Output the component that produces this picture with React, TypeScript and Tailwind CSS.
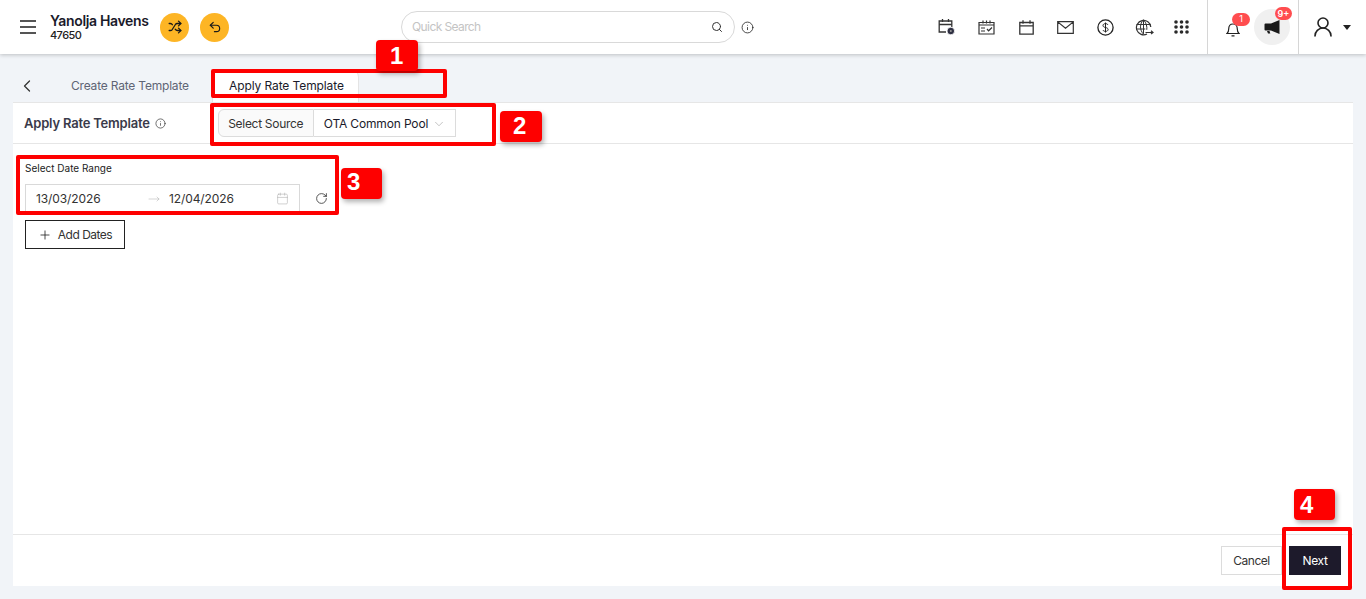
import React from 'react';
import { Shuffle, Undo2, Search, Info, ChevronLeft, ChevronDown, Calendar, RotateCw, Plus, MoveRight, UserRound } from 'lucide-react';

// red callout number over the screenshot
const Badge = ({ n, className }: { n: string; className: string }) => (
  <div className={`absolute z-20 flex h-[31px] items-center rounded-[4px] bg-[#fe0000] font-['Liberation_Sans',sans-serif] text-[24px] font-bold text-white shadow-[2px_3px_5px_rgba(0,0,0,0.3)] ${className}`}>
    {n}
  </div>
);

const Outline = ({ className }: { className: string }) => (
  <div className={`pointer-events-none absolute z-20 rounded-[2px] border-[4px] border-[#fe0000] ${className}`} />
);

const CalPlusIcon = () => (
  <svg width="18" height="18" viewBox="0 0 18 18" fill="none" stroke="#333" strokeWidth="1.3">
    <path d="M8 14H1.2V3h12.6v6" />
    <path d="M1.2 6.5h12.6M4.5 1v3M10.5 1v3" />
    <circle cx="12.8" cy="13" r="3.8" fill="#2f3042" stroke="#fff" strokeWidth="0.8" />
    <circle cx="12.8" cy="13" r="1" fill="#999" stroke="none" />
  </svg>
);

const CalListIcon = () => (
  <svg width="17" height="15" viewBox="0 0 17 15" fill="none" stroke="#333" strokeWidth="1.2">
    <path d="M1 2.5h15v11.5H1zM1 5h15M5 .5v3M8.5 .5v3M12 .5v3" />
    <path d="M3 8h4M3 11h4M9 9l1.6 1.8L14 7.5" />
  </svg>
);

const CalIcon = () => (
  <svg width="15" height="15" viewBox="0 0 15 15" fill="none" stroke="#333" strokeWidth="1.3">
    <path d="M.8 2.5h13.4v11.7H.8zM.8 5.8h13.4M4 .3v3.4M11 .3v3.4" />
  </svg>
);

const MailIcon = () => (
  <svg width="17" height="13" viewBox="0 0 17 13" fill="none" stroke="#333" strokeWidth="1.2">
    <path d="M.7.7h15.6v11.6H.7zM.7.9l7.8 6.4 7.8-6.4" />
  </svg>
);

const DollarIcon = () => (
  <svg width="17" height="17" viewBox="0 0 17 17" fill="none" stroke="#222" strokeWidth="1.3">
    <circle cx="8.5" cy="8.5" r="7.6" />
    <path d="M11 6c-.5-1-1.4-1.4-2.5-1.4C7.200 4.600 6 5.300 6 6.500s1.100 1.700 2.500 2 2.600.8 2.600 2-1.300 1.900-2.600 1.900c-1.100 0-2.100-.4-2.600-1.400M8.500 3.500v10" strokeWidth="1" />
  </svg>
);

const GlobeIcon = () => (
  <svg width="19" height="17" viewBox="0 0 19 17" fill="none" stroke="#333" strokeWidth="1">
    <path d="M12 15A7.200 7.200 0 1 1 15.800 8" strokeWidth="1.2" />
    <path d="M8.500 .8c-4 4-4 10 0 14.400M8.500 .8c3 3 3.600 7 3.300 10M8.500 .8v14M1.500 5.500h14M1.300 10h9" />
    <path d="M10.500 13.500h7.500M16 11.800l2 1.700-2 1.500" strokeWidth="1.2" />
  </svg>
);

const GripIcon = () => (
  <svg width="15" height="14" viewBox="0 0 15 14" fill="#2a2a2a">
    {[2, 7.5, 13].flatMap((cx) =>
      [2, 7, 12].map((cy) => <circle key={`${cx}-${cy}`} cx={cx} cy={cy} r="1.8" />)
    )}
  </svg>
);

const BellIcon = () => (
  <svg width="14" height="15" viewBox="0 0 14 15" fill="none" stroke="#222" strokeWidth="1.200">
    <path d="M1 11.500c1.400-1 1.700-2.500 1.700-4.500C2.700 4 4.500 2 7 2s4.300 2 4.300 5c0 2 .3 3.500 1.700 4.500zM5.500 13.800h3" />
  </svg>
);

const MegaphoneIcon = () => (
  <svg width="16" height="15" viewBox="0 0 16 15" fill="#1a1a1a">
    <path d="M15.500 0v14L7 10.500H1.500A1 1 0 0 1 .5 9.500v-5a1 1 0 0 1 1-1H7z" />
    <path d="M3 11h2.500l.8 2.500H4z" />
  </svg>
);

const Header = () => (
  <header className="relative z-10 flex h-[54px] items-center bg-white pl-[20px] shadow-[0_1px_4px_rgba(0,0,0,0.22)]">
    <div className="flex w-[16px] flex-col gap-[4.500px]">
      <span className="h-[1.500px] bg-[#555]" />
      <span className="h-[1.500px] bg-[#555]" />
      <span className="h-[1.500px] bg-[#555]" />
    </div>
    <div className="ml-[14px] w-[110px]">
      <div className="text-[14px] leading-[17px] font-semibold tracking-[-0.35px] text-[#1a1a2a]">Yanolja Havens</div>
      <div className="text-[11px] leading-[13px] font-medium tracking-[-0.6px] text-[#222]">47650</div>
    </div>
    <button className="flex h-[29px] w-[29px] items-center justify-center rounded-full bg-[#fdb525]">
      <Shuffle size={14} strokeWidth={2.2} className="text-[#1a1a1a]" />
    </button>
    <button className="ml-[11px] flex h-[29px] w-[29px] items-center justify-center rounded-full bg-[#fdb525]">
      <Undo2 size={14} strokeWidth={2} className="text-[#1a1a1a]" />
    </button>
    <div className="ml-[172px] flex h-[32px] w-[334px] items-center justify-between rounded-full border border-[#d9d9d9] pr-[11px] pl-[10px]">
      <span className="text-[12px] tracking-[-0.6px] text-[#c4c4c4]">Quick Search</span>
      <Search size={12} strokeWidth={2} className="text-[#333]" />
    </div>
    <Info size={13} strokeWidth={1.5} className="ml-[6px] text-[#222]" />
    <div className="ml-[184px] flex items-center">
      <div className="flex w-[40px]"><CalPlusIcon /></div>
      <div className="flex w-[41px]"><CalListIcon /></div>
      <div className="flex w-[38px]"><CalIcon /></div>
      <div className="flex w-[40px]"><MailIcon /></div>
      <div className="flex w-[38px]"><DollarIcon /></div>
      <div className="flex w-[39px]"><GlobeIcon /></div>
      <div className="flex w-[33px]"><GripIcon /></div>
    </div>
    <div className="flex h-[54px] items-center border-l border-[#d6d6d6]">
      <div className="relative ml-[18px] mt-[4px]">
        <BellIcon />
        <span className="absolute top-[-9px] left-[6px] flex h-[13px] w-[18px] items-center justify-center rounded-full bg-[#ff4d4f] text-[9px] text-white">1</span>
      </div>
      <div className="relative ml-[14px] flex h-[36px] w-[36px] items-center justify-center rounded-full bg-[#f0f0f0]">
        <MegaphoneIcon />
        <span className="absolute top-[-2px] left-[21px] flex h-[13px] w-[17px] items-center justify-center rounded-full bg-[#ff4d4f] text-[9px] font-semibold text-white">9+</span>
      </div>
    </div>
    <div className="ml-[8px] flex h-[54px] items-center border-l border-[#d6d6d6] pl-[12px]">
      <UserRound size={24} strokeWidth={1.6} className="text-[#222]" />
      <span className="ml-[8px] h-0 w-0 border-x-[4px] border-t-[5px] border-x-transparent border-t-[#222]" />
    </div>
  </header>
);

export default function App() {
  return (
    <div className="relative flex h-[599px] flex-col overflow-hidden bg-[#f1f4f8] font-['Inter','Liberation_Sans',sans-serif]">
      <Header />
      <div className="flex h-[48px] items-end pl-[13px]">
        <div className="flex h-[33px] w-[45px] items-center pl-[4px]">
          <ChevronLeft size={20} strokeWidth={1.5} className="text-[#333]" />
        </div>
        <div className="flex h-[33px] w-[154px] items-center pl-[13px] text-[12px] tracking-[-0.2px] text-[#5f6475]">Create Rate Template</div>
        <div className="flex h-[33px] w-[147px] items-center rounded-t-[8px] border-x border-t border-[#e4e4e4] bg-white pl-[16px] text-[12px] tracking-[-0.1px] text-[#1a1a2a]">
          Apply Rate Template
        </div>
      </div>
      <main className="mx-[13px] flex h-[484px] flex-col bg-white">
        <div className="flex h-[42px] items-center border-y border-[#e6e6e6] pl-[11px]">
          <span className="pt-[2px] text-[13px] font-semibold tracking-[-0.2px] text-[#3a3a4a]">Apply Rate Template</span>
          <Info size={11} strokeWidth={1.5} className="ml-[5px] text-[#333]" />
          <div className="ml-[52px] flex h-[28px] items-stretch text-[12px] text-[#333]">
            <div className="flex w-[96px] items-center justify-center rounded-l-[6px] border border-[#dcdcdc] bg-[#fafafa] pt-[1px] tracking-[-0.3px]">Select Source</div>
            <div className="flex w-[142px] items-center justify-between border-y border-r border-[#dcdcdc] pt-[1px] pr-[9px] pl-[10px] tracking-[-0.15px] text-[#1a1a2a]">
              OTA Common Pool
              <ChevronDown size={14} strokeWidth={1} className="text-[#999]" />
            </div>
          </div>
        </div>
        <div className="flex-1 pt-[18px] pl-[12px]">
          <div className="text-[10px] leading-[13px] text-[#222]">Select Date Range</div>
          <div className="mt-[9px] flex items-center">
            <div className="flex h-[28px] w-[275px] items-center border border-[#d9d9d9] pt-[1px] pr-[10px] pl-[10px] text-[12px] tracking-[-0.1px] text-[#333]">
              <span className="w-[112px]">13/03/2026</span>
              <MoveRight size={12} strokeWidth={1} className="text-[#aaa]" />
              <span className="ml-[9px] flex-1">12/04/2026</span>
              <Calendar size={13} strokeWidth={1} className="text-[#aaa]" />
            </div>
            <RotateCw size={13} strokeWidth={1.5} className="ml-[15px] text-[#333]" />
          </div>
          <button className="mt-[8px] flex h-[29px] w-[100px] items-center justify-center gap-[6px] border border-[#222] text-[12px] tracking-[-0.5px] text-[#333]">
            <Plus size={14} strokeWidth={1.4} className="text-[#222]" />
            Add Dates
          </button>
        </div>
        <div className="flex h-[52px] items-center justify-end gap-[7px] border-t border-[#e6e6e6] pr-[12px]">
          <button className="h-[29px] w-[61px] border border-[#dcdcdc] text-[12px] tracking-[-0.5px] text-[#333]">Cancel</button>
          <button className="h-[29px] w-[52px] bg-[#1d1a2b] text-[12px] tracking-[-0.4px] text-white">Next</button>
        </div>
      </main>

      <Outline className="top-[69px] left-[211px] h-[29px] w-[236px]" />
      <Outline className="top-[103px] left-[210px] h-[43px] w-[286px]" />
      <Outline className="top-[155px] left-[16px] h-[60px] w-[323px]" />
      <Outline className="top-[527px] left-[1282px] h-[63px] w-[70px]" />
      <Badge n="1" className="top-[40px] left-[376px] w-[42px] pl-[14px]" />
      <Badge n="2" className="top-[111px] left-[500px] w-[42px] pb-[2px] pl-[13px]" />
      <Badge n="3" className="top-[168px] left-[341px] w-[41px] pb-[4px] pl-[6px]" />
      <Badge n="4" className="top-[489px] left-[1294px] w-[41px] pl-[6px]" />
    </div>
  );
}
